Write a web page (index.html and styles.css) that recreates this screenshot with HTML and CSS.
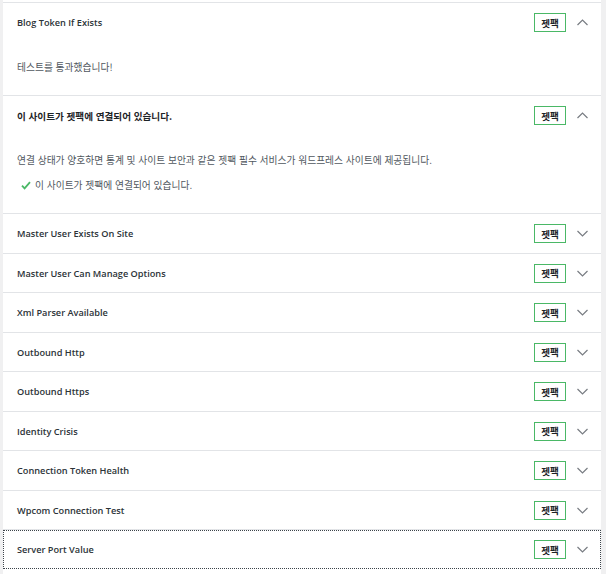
FILE: index.html
```html
<!DOCTYPE html>
<html lang="ko">
<head>
  <meta charset="UTF-8">
  <meta name="viewport" content="width=device-width, initial-scale=1.0">
  <title>Jetpack 연결 테스트</title>
  <link rel="stylesheet" href="styles.css">
</head>
<body>
  <div class="panel">
    <div class="item open">
      <div class="head">
        <span class="title">Blog Token If Exists</span>
        <span class="badge">젯팩</span>
        <svg class="chev" width="11" height="7" viewBox="0 0 11 7"><path d="M0.5 6L5.5 1L10.5 6" /></svg>
      </div>
      <div class="body">
        <p>테스트를 통과했습니다!</p>
      </div>
    </div>

    <div class="item open">
      <div class="head">
        <span class="title ko">이 사이트가 젯팩에 연결되어 있습니다.</span>
        <span class="badge">젯팩</span>
        <svg class="chev" width="11" height="7" viewBox="0 0 11 7"><path d="M0.5 6L5.5 1L10.5 6" /></svg>
      </div>
      <div class="body">
        <p>연결 상태가 양호하면 통계 및 사이트 보안과 같은 젯팩 필수 서비스가 워드프레스 사이트에 제공됩니다.</p>
        <p class="ok">
          <svg class="check" width="10" height="9" viewBox="0 0 10 9"><path d="M1 4.6L3.6 7.4L9 1.2" /></svg>
          이 사이트가 젯팩에 연결되어 있습니다.
        </p>
      </div>
    </div>

    <div class="item">
      <div class="head">
        <span class="title">Master User Exists On Site</span>
        <span class="badge">젯팩</span>
        <svg class="chev" width="11" height="7" viewBox="0 0 11 7"><path d="M0.5 1L5.5 6L10.5 1" /></svg>
      </div>
    </div>
    <div class="item">
      <div class="head">
        <span class="title">Master User Can Manage Options</span>
        <span class="badge">젯팩</span>
        <svg class="chev" width="11" height="7" viewBox="0 0 11 7"><path d="M0.5 1L5.5 6L10.5 1" /></svg>
      </div>
    </div>
    <div class="item">
      <div class="head">
        <span class="title">Xml Parser Available</span>
        <span class="badge">젯팩</span>
        <svg class="chev" width="11" height="7" viewBox="0 0 11 7"><path d="M0.5 1L5.5 6L10.5 1" /></svg>
      </div>
    </div>
    <div class="item">
      <div class="head">
        <span class="title">Outbound Http</span>
        <span class="badge">젯팩</span>
        <svg class="chev" width="11" height="7" viewBox="0 0 11 7"><path d="M0.5 1L5.5 6L10.5 1" /></svg>
      </div>
    </div>
    <div class="item">
      <div class="head">
        <span class="title">Outbound Https</span>
        <span class="badge">젯팩</span>
        <svg class="chev" width="11" height="7" viewBox="0 0 11 7"><path d="M0.5 1L5.5 6L10.5 1" /></svg>
      </div>
    </div>
    <div class="item">
      <div class="head">
        <span class="title">Identity Crisis</span>
        <span class="badge">젯팩</span>
        <svg class="chev" width="11" height="7" viewBox="0 0 11 7"><path d="M0.5 1L5.5 6L10.5 1" /></svg>
      </div>
    </div>
    <div class="item">
      <div class="head">
        <span class="title">Connection Token Health</span>
        <span class="badge">젯팩</span>
        <svg class="chev" width="11" height="7" viewBox="0 0 11 7"><path d="M0.5 1L5.5 6L10.5 1" /></svg>
      </div>
    </div>
    <div class="item">
      <div class="head">
        <span class="title">Wpcom Connection Test</span>
        <span class="badge">젯팩</span>
        <svg class="chev" width="11" height="7" viewBox="0 0 11 7"><path d="M0.5 1L5.5 6L10.5 1" /></svg>
      </div>
    </div>
    <div class="item focused">
      <div class="head">
        <span class="title">Server Port Value</span>
        <span class="badge">젯팩</span>
        <svg class="chev" width="11" height="7" viewBox="0 0 11 7"><path d="M0.5 1L5.5 6L10.5 1" /></svg>
      </div>
    </div>
  </div>
</body>
</html>
```

FILE: styles.css
```css
body {
  margin: 0;
  background-color: #f0f0f1;
  font-family: "Open Sans", "Noto Sans CJK KR", sans-serif;
  color: #1d2327;
}
.panel {
  margin-left: 3px;
  width: 598px;
  padding-top: 2px;
  background: #fff;
  height: 572px;
}
.item {
  border-top: 1px solid #e2e4e7;
}
.head {
  display: flex;
  align-items: center;
  box-sizing: border-box;
  height: 38.5px;
  padding: 1px 13px 0 14px;
}
.title {
  flex: 1;
  font-size: 9.2px;
  font-weight: 600;
  color: #2c3338;
}
.title.ko {
  font-family: "Noto Sans CJK KR", sans-serif;
  font-size: 9.6px;
  font-weight: 700;
  color: #1d2327;
}
.badge {
  width: 32px;
  height: 19px;
  box-sizing: border-box;
  border: 1px solid #4ab866;
  display: flex;
  justify-content: center;
  align-items: center;
  font-family: "Noto Sans CJK KR", sans-serif;
  font-size: 9.6px;
  font-weight: 700;
  margin-right: 11px;
}
.chev {
  fill: none;
  stroke: #787c82;
  stroke-width: 1.2;
}
.body {
  padding: 18px 14px 20.5px;
}
.body p {
  margin: 0;
  line-height: 15px;
  font-family: "Noto Sans CJK KR", sans-serif;
  font-size: 9.75px;
  color: #50575e;
}
.body p + p {
  margin-top: 10px;
}
.ok {
  display: flex;
  align-items: center;
  padding-left: 4px;
}
.check {
  fill: none;
  stroke: #4ab866;
  stroke-width: 1.8;
  margin-right: 4px;
}
.focused .head {
  outline: 1px dotted #3c434a;
  outline-offset: -1px;
}
```
